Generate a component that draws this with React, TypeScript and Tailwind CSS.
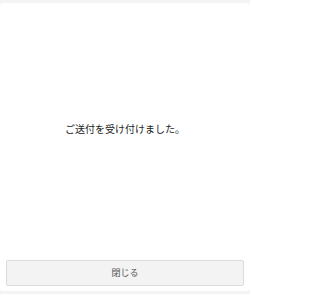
export default function App() {
  return (
    <div className="h-[294px] w-[250px] bg-[#f4f4f4] pt-[3px] font-['Noto_Sans_CJK_JP',sans-serif]">
      <div className="flex h-[288px] flex-col rounded-[3px] bg-white px-[6px] pb-[5px]">
        <div className="flex flex-1 items-center justify-center">
          <p className="text-[10px] leading-none text-[#222]">ご送付を受け付けました。</p>
        </div>
        <button className="mt-[6px] h-[26px] w-full rounded-[2px] border border-[#dcdcdc] bg-[#f3f3f3] text-[9px] text-[#555]">
          閉じる
        </button>
      </div>
    </div>
  );
}
